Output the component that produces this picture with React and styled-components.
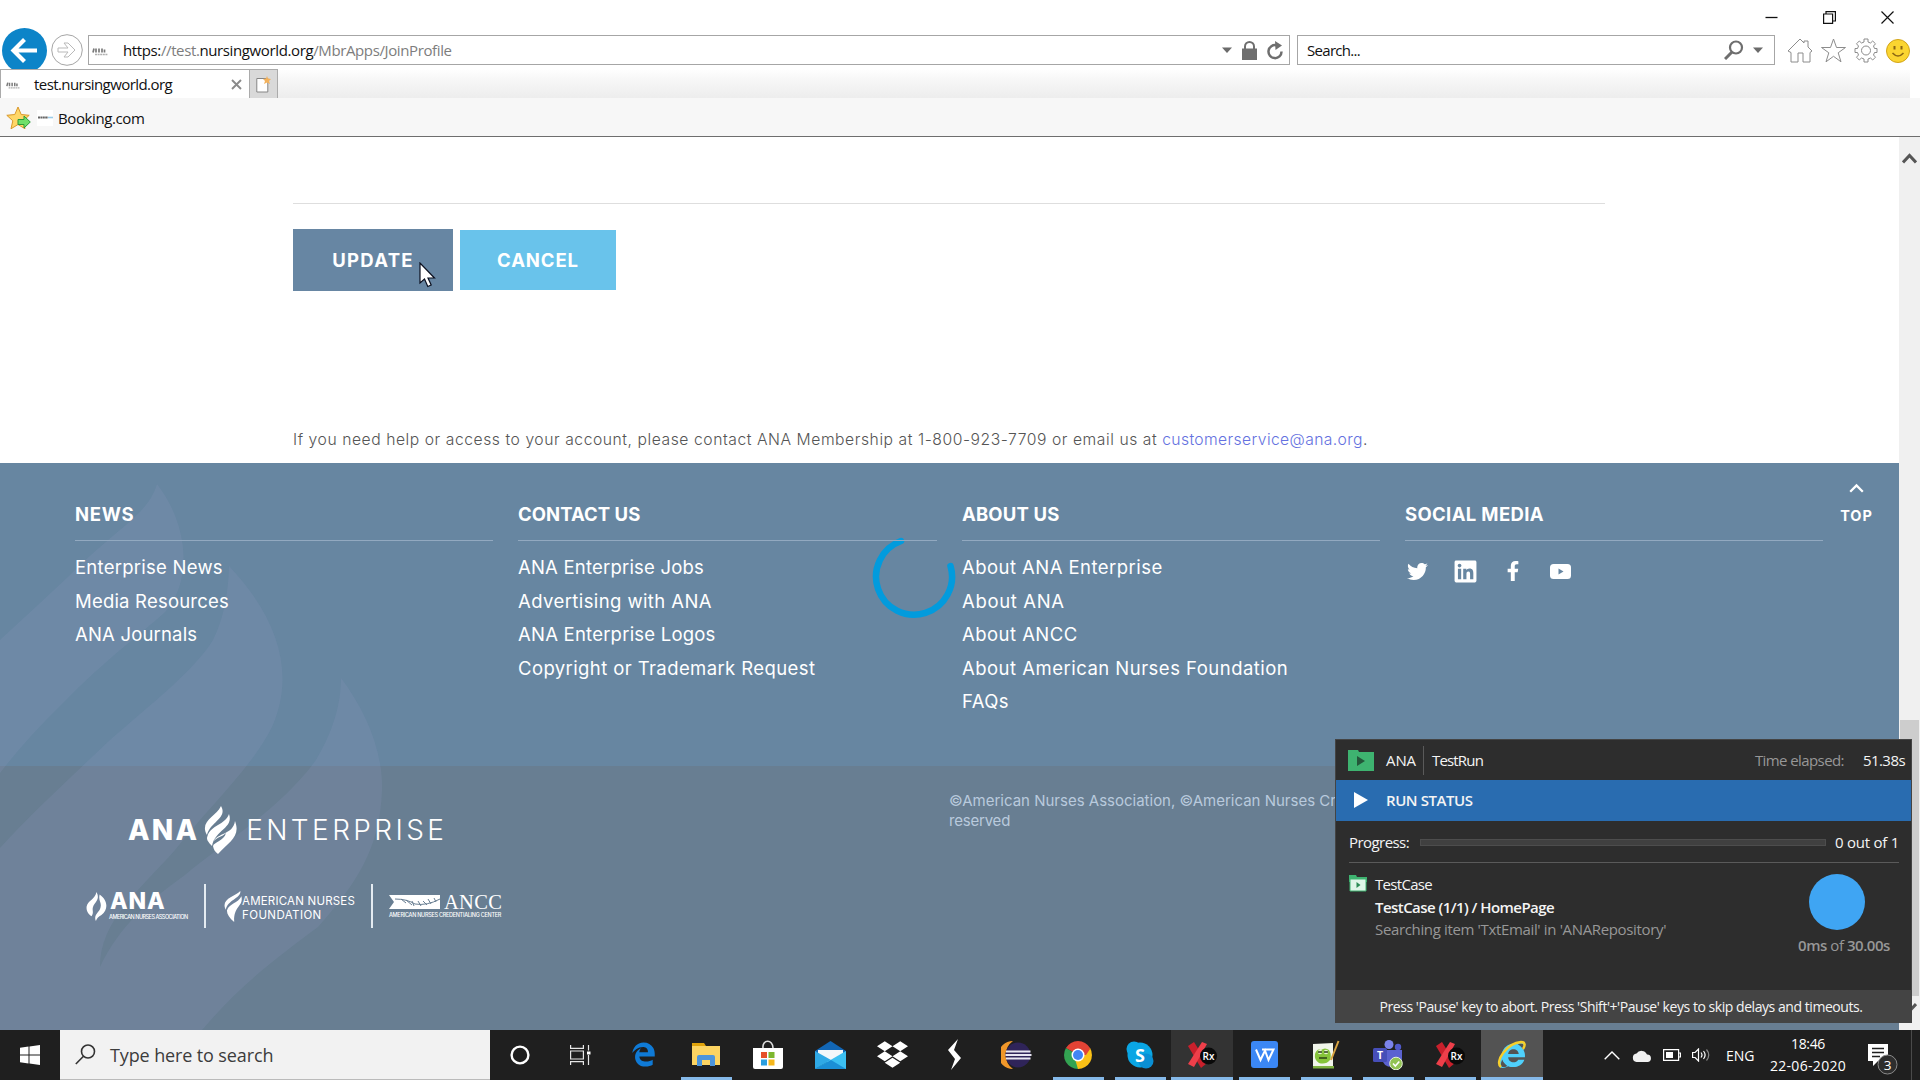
import React from 'react';
import styled, { createGlobalStyle } from 'styled-components';
import { FaTwitter, FaLinkedin, FaFacebookF, FaDropbox, FaEdgeLegacy, FaInternetExplorer } from 'react-icons/fa';

const Global = createGlobalStyle`
  * { box-sizing: border-box; }
  html, body { margin: 0; padding: 0; overflow: hidden; }
  body { background: #fff; }
  svg { display: block; flex: none; }
`;

const SYSTEM = '"Open Sans", "Noto Sans", sans-serif';
const BRAND = 'Inter, "Open Sans", sans-serif';

const Desktop = styled.div`
  position: relative;
  display: flex;
  flex-direction: column;
  width: 1920px;
  height: 1080px;
  overflow: hidden;
  background: #fff;
  font-family: ${SYSTEM};
`;

const Label = styled.span`
  white-space: nowrap;
  letter-spacing: ${p => (p.$ls === undefined ? 'inherit' : `${p.$ls}px`)};
  color: ${p => p.$color || 'inherit'};
  font-weight: ${p => p.$weight || 'inherit'};
`;

/* ---------- browser chrome ---------- */
const TitleBar = styled.div`
  display: flex;
  justify-content: flex-end;
  align-items: flex-end;
  height: 28px;
  padding: 0 26px 4px 0;
  gap: 45px;
`;
const NavRow = styled.div`
  display: flex;
  height: 41px;
  padding-left: 2px;
  overflow: hidden;
`;
const ForwardWrap = styled.div`
  margin: 6px 5px 0 4px;
`;
const Field = styled.div`
  display: flex;
  align-items: center;
  width: ${p => p.$w}px;
  height: 30px;
  margin: 7px ${p => p.$mr}px 0 0;
  padding: 0 ${p => p.$pr}px 0 ${p => p.$pl}px;
  border: 1px solid #a6a6a6;
  font-size: 15px;
  color: #111;
`;
const Spring = styled.div`
  flex: 1;
`;
const FieldIcons = styled.div`
  display: flex;
  align-items: center;
  gap: ${p => p.$gap}px;
`;
const ToolIcons = styled.div`
  display: flex;
  align-items: center;
  gap: 8px;
  padding-top: 4px;
`;
const TabRow = styled.div`
  display: flex;
  height: 29px;
  margin-right: 10px;
  background: linear-gradient(#ffffff 0%, #f7f7f7 35%, #ededed 100%);
`;
const Tab = styled.div`
  display: flex;
  align-items: center;
  width: 250px;
  padding: 0 7px 0 5px;
  border: 1px solid #ababab;
  border-bottom: 0;
  background: #fff;
  font-size: 15px;
  color: #111;
`;
const NewTab = styled.div`
  display: flex;
  align-items: center;
  justify-content: center;
  width: 28px;
  border: 1px solid #ababab;
  border-left: 0;
  border-bottom: 0;
  background: #d9d9d9;
`;
const Favourites = styled.div`
  display: flex;
  align-items: center;
  height: 39px;
  padding: 2px 0 0 6px;
  border-bottom: 1px solid #6e6e6e;
  background: #f7f7f7;
  font-size: 15px;
  color: #111;
`;
const SiteMark = styled.div`
  width: ${p => p.$w}px;
  margin-right: ${p => p.$mr}px;
`;

/* ---------- page ---------- */
const Viewport = styled.div`
  display: flex;
  height: 893px;
`;
const Page = styled.div`
  position: relative;
  display: flex;
  flex-direction: column;
  width: 1899px;
  font-family: ${BRAND};
`;
const Scrollbar = styled.div`
  display: flex;
  flex-direction: column;
  align-items: center;
  width: 21px;
  background: #f0f0f0;
`;
const ScrollCap = styled.div`
  display: flex;
  align-items: center;
  justify-content: center;
  height: 43px;
`;
const ScrollThumb = styled.div`
  width: 19px;
  height: 276px;
  margin-top: 540px;
  background: #cdcdcd;
`;
const Form = styled.main`
  display: flex;
  flex-direction: column;
  height: 326px;
  padding: 66px 294px 0 293px;
`;
const Rule = styled.div`
  height: 1px;
  background: ${p => p.$color};
`;
const Buttons = styled.div`
  display: flex;
  align-items: center;
  gap: 7px;
  margin-top: 25px;
`;
const Button = styled.div`
  display: flex;
  align-items: center;
  justify-content: center;
  width: ${p => p.$w}px;
  height: ${p => p.$h}px;
  background: ${p => p.$bg};
  font-size: 18.5px;
  font-weight: 700;
  color: #fff;
`;
const Help = styled.p`
  margin: 138px 0 0;
  font-size: 15.7px;
  font-weight: 300;
  line-height: 22px;
  color: #555;
  white-space: nowrap;
`;

const Footer = styled.footer`
  position: relative;
  display: flex;
  flex-direction: column;
  height: 567px;
  color: #fff;
`;
const FooterTop = styled.section`
  display: grid;
  grid-template-columns: 418px 419px 418px 418px auto;
  column-gap: 25px;
  height: 303px;
  padding-left: 75px;
  background: #6786a1;
`;
const FooterBottom = styled.section`
  display: flex;
  height: 264px;
  background: #687e92;
`;
const Flames = styled.svg`
  position: absolute;
  left: 0;
  top: 0;
`;
const Column = styled.div`
  position: relative;
  z-index: 1;
  padding-top: 38px;
`;
const Heading = styled.h3`
  margin: 0 0 12px;
  height: 27px;
  line-height: 27px;
  font-size: 18.5px;
  font-weight: 700;
`;
const Links = styled.div`
  display: flex;
  flex-direction: column;
  margin-top: 10px;
  font-size: 18.5px;
  line-height: 33.6px;
`;
const Social = styled.div`
  display: flex;
  align-items: center;
  margin-top: 18px;
  height: 24px;
  padding-left: 2px;
`;
const SocialSlot = styled.div`
  display: flex;
  width: ${p => p.$w}px;
`;
const ToTop = styled.div`
  display: flex;
  flex-direction: column;
  align-items: center;
  width: 33px;
  margin-left: -8px;
  padding-top: 20px;
  font-size: 14.5px;
  font-weight: 700;
  line-height: 20px;
  gap: 13px;
`;
const Brands = styled.div`
  position: relative;
  z-index: 1;
  width: 949px;
  padding: 39px 0 0 86px;
`;
const MainLogo = styled.div`
  display: flex;
  align-items: center;
  height: 50px;
  margin-left: 42px;
  font-size: 28px;
`;
const SubLogos = styled.div`
  display: flex;
  align-items: center;
  height: 44px;
  margin-top: 29px;
`;
const Divider = styled.div`
  width: ${p => (p.$w === undefined ? 2 : p.$w)}px;
  height: ${p => p.$h}px;
  background: ${p => p.$color || 'transparent'};
  margin: 0 ${p => p.$mr || 0}px 0 ${p => p.$ml || 0}px;
`;
const Stack = styled.div`
  display: flex;
  flex-direction: column;
  width: ${p => p.$w}px;
  margin-left: ${p => p.$ml || 0}px;
  padding-top: ${p => p.$pt || 0}px;
  font-size: ${p => p.$size}px;
  line-height: ${p => p.$lh}px;
  font-weight: ${p => p.$weight || 400};
`;
const Tiny = styled.div`
  font-size: 5.5px;
  font-weight: ${p => p.$weight || 500};
  line-height: 7px;
  letter-spacing: ${p => p.$ls}px;
  margin-left: ${p => p.$ml || 0}px;
  margin-top: ${p => p.$mt || 0}px;
  white-space: nowrap;
`;
const AnccRow = styled.div`
  display: flex;
  align-items: center;
  height: 18px;
  gap: 4px;
  font: 400 20.5px/18px "Liberation Serif", serif;
`;
const Copyright = styled.div`
  padding-top: 25px;
  font-size: 15px;
  line-height: 20px;
  color: #b9cadd;
  white-space: nowrap;
`;
const Spinner = styled.svg`
  position: absolute;
  left: 870px;
  top: 533px;
`;
const Cursor = styled.svg`
  position: absolute;
  left: 419px;
  top: 262px;
`;

/* ---------- run status window ---------- */
const Run = styled.div`
  position: absolute;
  left: 1335px;
  top: 739px;
  display: flex;
  flex-direction: column;
  width: 577px;
  height: 284px;
  border: 1px solid #444;
  background: #2d2d2d;
  font-size: 15px;
  color: #f4f4f4;
`;
const RunHead = styled.div`
  display: flex;
  align-items: center;
  height: 40px;
  padding: 0 6px 0 12px;
`;
const RunStatus = styled.div`
  display: flex;
  align-items: center;
  height: 41px;
  padding: 0 0 1px 18px;
  gap: 18px;
  background: #296cb0;
`;
const RunBody = styled.div`
  flex: 1;
  padding: 8px 12px 0 13px;
`;
const Progress = styled.div`
  display: flex;
  align-items: center;
  height: 26px;
  margin-bottom: 7px;
`;
const Track = styled.div`
  flex: 1;
  height: 7px;
  margin: 0 9px 0 11px;
  border: 1px solid #4d4d4d;
  background: #404040;
`;
const Case = styled.div`
  display: flex;
  margin-top: 10px;
`;
const CaseText = styled.div`
  display: flex;
  flex-direction: column;
  flex: 1;
  margin-left: 8px;
  line-height: 22.5px;
`;
const Timer = styled.div`
  display: flex;
  flex-direction: column;
  align-items: center;
  width: 94px;
  margin-right: 8px;
`;
const Dot = styled.div`
  width: 56px;
  height: 56px;
  margin: 1px 14px 5px 0;
  border-radius: 50%;
  background: #3fa5f3;
`;
const RunFoot = styled.div`
  display: flex;
  align-items: center;
  justify-content: center;
  height: 32px;
  padding-right: 5px;
  background: #444;
  font-size: 14px;
`;

/* ---------- taskbar ---------- */
const Taskbar = styled.div`
  display: flex;
  height: 50px;
  background: #1f1f1f;
  color: #fff;
`;
const Start = styled.div`
  display: flex;
  align-items: center;
  width: 60px;
  padding-left: 20px;
`;
const SearchBox = styled.div`
  display: flex;
  align-items: center;
  gap: 14px;
  width: 430px;
  padding-left: 15px;
  background: #f2f2f2;
  border-bottom: 1px solid #bbb;
  font-size: 18px;
  color: #3c3c3c;
`;
const TaskButton = styled.div`
  display: flex;
  flex-direction: column;
  align-items: center;
  width: ${p => p.$w || 62}px;
  background: ${p => p.$bg || 'transparent'};
`;
const TaskIcon = styled.div`
  display: flex;
  align-items: center;
  justify-content: center;
  height: 47px;
  padding-top: 2px;
`;
const Running = styled.div`
  width: ${p => (p.$full ? '100%' : '51px')};
  height: 3px;
  background: #85b9e9;
`;
const Tray = styled.div`
  display: flex;
  align-items: center;
  flex: 1;
  padding: 0 5px 0 61px;
  font-size: 14px;
`;
const TrayItem = styled.div`
  width: ${p => p.$w}px;
  margin-right: ${p => p.$mr}px;
  padding-top: ${p => p.$pt || 0}px;
`;
const Clock = styled.div`
  display: flex;
  flex-direction: column;
  align-items: center;
  width: 78px;
  margin-right: 21px;
  line-height: 22.5px;
`;

const SmallMark = ({ w = 16 }) => (
  <svg width={w} height="14" viewBox="0 0 16 14">
    <path d="M1 9.500l1-4M4 9.500v-4M7 9.500v-4M10 9.500v-4M12.500 9.500v-3" stroke="#7a7a7a" strokeWidth="1.700" />
    <path d="M3 11.500h13" stroke="#b0b0b0" strokeWidth="1.400" strokeDasharray="2 .6" />
  </svg>
);

const Flame = ({ w, h, kind }) => (
  <svg width={w} height={h} viewBox="0 0 34 48" preserveAspectRatio="none" fill="#fff">
    {kind === 'full' && (
      <>
        <path d="M18 0C25 12 7 16 4 29C-4 15 13 11 18 0Z" />
        <path d="M26 8C31 22 12 24 9 40C5 36 3 33 4.500 30C8 19 22 19 26 8Z" />
        <path d="M32 15C38 31 26 36 15 48C12 46 10.500 43 10 40C11 36 21 35 23 27C19 31 14 31 11 35C14 27 30 29 32 15Z" />
      </>
    )}
    {kind === 'duo' && (
      <>
        <path d="M17 0C24 13 13 17 11 26C10 31 13 34 9 40C4 37 0 31 1 24C3 14 14 13 17 0Z" />
        <path d="M22 4C35 13 37 29 25 38C20 41 18 43 16 48C11 36 24 34 24 22C24 16 20 14 22 4Z" />
      </>
    )}
    {kind === 'single' && (
      <>
        <path d="M31 0C33 11 8 14 5 29C-5 12 21 9 31 0Z" />
        <path d="M33 8C37 25 19 22 20 48C12 42 7 36 7 30C11 19 27 19 33 8Z" />
      </>
    )}
  </svg>
);

const Rx = () => (
  <svg width="30" height="29" viewBox="0 0 30 29">
    <path d="M1 6L7 2L20 23L14 28Z" fill="#c9202c" />
    <path d="M15 2L20 4L7 27L1 24Z" fill="#ee3f4a" />
    <circle cx="21.5" cy="16" r="8.5" fill="#0a0a0a" />
    <text x="15.5" y="20" fontFamily="Open Sans" fontWeight="600" fontSize="10" fill="#fff">Rx</text>
  </svg>
);

const PINS = [
  { id: 'edge', w: 64, icon: <FaEdgeLegacy size={25} color="#0f7ad6" /> },
  {
    id: 'files', run: true,
    icon: (
      <svg width="28" height="25" viewBox="0 0 28 25">
        <path d="M0 1h12l2 3h-14z" fill="#e0a30b" />
        <path d="M0 4h28v19H0z" fill="#fcd462" />
        <path d="M5 24v-9q0-2 2-2h14q2 0 2 2v9h-5v-6h-8v6z" fill="#4c95dc" />
      </svg>
    ),
  },
  {
    id: 'store',
    icon: (
      <svg width="30" height="30" viewBox="0 0 30 30">
        <path d="M10 8C9 -1 20 -1 20 8" fill="none" stroke="#ddd" strokeWidth="1.6" />
        <path d="M0 8h30v19q0 2-2 2H2q-2 0-2-2z" fill="#fff" />
        <path d="M8 12h6v6H8z" fill="#e5502a" /><path d="M15.500 12h6v6h-6z" fill="#7db72f" />
        <path d="M8 19.500h6v6H8z" fill="#2a9fe0" /><path d="M15.500 19.500h6v6h-6z" fill="#f6b71b" />
      </svg>
    ),
  },
  {
    id: 'mail',
    icon: (
      <svg width="31" height="28" viewBox="0 0 31 28">
        <path d="M0 10L15.500 0L31 10v4H0z" fill="#1266b5" />
        <path d="M3 9h25v12H3z" fill="#f3f7fa" />
        <path d="M0 10l16 9l-16 9z" fill="#2fa9e6" />
        <path d="M31 10L0 28h31z" fill="#3cc0f2" />
        <path d="M16 19l15 9H0z" fill="#1b8fd6" />
      </svg>
    ),
  },
  { id: 'dropbox', icon: <FaDropbox size={31} color="#fff" /> },
  {
    id: 'bolt',
    icon: (
      <svg width="14" height="31" viewBox="0 0 14 31">
        <path d="M11 0L1 11L8 20L4 31L14 19L7 11Z" fill="#fff" />
      </svg>
    ),
  },
  {
    id: 'eclipse',
    icon: (
      <svg width="31" height="28" viewBox="0 0 31 28">
        <path d="M12 0A14.500 14 0 0 0 12 28A17 17 0 0 1 12 0Z" fill="#f0972a" />
        <circle cx="17" cy="14" r="12.500" fill="#2f2459" />
        <path d="M5 10.500h24.500M4.500 14h26M5 17.500h24.500" stroke="#e9e7f3" strokeWidth="2" />
      </svg>
    ),
  },
  {
    id: 'chrome', run: true,
    icon: (
      <svg width="28" height="28" viewBox="0 0 28 28">
        <path d="M14 14L1.900 7A14 14 0 0 1 26.100 7Z" fill="#e24335" />
        <path d="M14 14L26.100 7A14 14 0 0 1 14 28Z" fill="#fbc116" />
        <path d="M14 14V28A14 14 0 0 1 1.900 7Z" fill="#33a352" />
        <path d="M14 7.500H26.400L22 14H14Z" fill="#e24335" />
        <path d="M19.600 17.200L14 28L11 18Z" fill="#fbc116" />
        <circle cx="14" cy="14" r="6.500" fill="#fff" />
        <circle cx="14" cy="14" r="5" fill="#4285f4" />
      </svg>
    ),
  },
  {
    id: 'skype', run: true,
    icon: (
      <svg width="28" height="28" viewBox="0 0 28 28">
        <circle cx="14" cy="14" r="12.500" fill="#0aa6e4" />
        <circle cx="8" cy="8" r="7.500" fill="#0aa6e4" /><circle cx="20" cy="20" r="7.500" fill="#0a8fd4" />
        <text x="14" y="20.500" textAnchor="middle" fontFamily="Open Sans" fontWeight="700" fontSize="18" fill="#fff">S</text>
      </svg>
    ),
  },
  { id: 'ranorex', run: true, full: true, bg: '#333', icon: <Rx /> },
  {
    id: 'wps', run: true,
    icon: (
      <svg width="27" height="27" viewBox="0 0 27 27">
        <rect width="27" height="27" rx="3" fill="#3b87f5" />
        <path d="M5 8.500L9.500 19L14 9.500L17.500 19L22.500 8.500H11" fill="none" stroke="#fff" strokeWidth="2" />
      </svg>
    ),
  },
  {
    id: 'notepad', run: true,
    icon: (
      <svg width="28" height="29" viewBox="0 0 28 29">
        <path d="M1 4l20-1v25H1z" fill="#f1f5ea" />
        <path d="M1 26h21v2.500H1z" fill="#7fb241" />
        <path d="M3 14q2-6 6-4q4-3 8 0q3 5 1 10q-4 5-11 3q-5-3-4-9z" fill="#86c43a" />
        <circle cx="8" cy="12" r="2.200" fill="#e9f5d5" /><circle cx="14" cy="12" r="2.200" fill="#e9f5d5" />
        <path d="M6 12h4M12 12h4M7 18h8" stroke="#2d4315" strokeWidth="1.500" />
        <path d="M26.500 1L19 20" stroke="#d9a441" strokeWidth="2" />
      </svg>
    ),
  },
  {
    id: 'teams', run: true,
    icon: (
      <svg width="30" height="30" viewBox="0 0 30 30">
        <circle cx="16" cy="4.500" r="4.500" fill="#7b83eb" /><circle cx="25" cy="7" r="3.200" fill="#5059c9" />
        <path d="M9 10h20v9q-2 8-10 8q-9 0-10-9z" fill="#5b62d0" />
        <rect y="8" width="14" height="14" rx="1.500" fill="#464eb8" />
        <text x="7" y="18.800" textAnchor="middle" fontFamily="Open Sans" fontWeight="700" fontSize="10.500" fill="#fff">T</text>
        <circle cx="23" cy="23.500" r="6.300" fill="#92c353" stroke="#e8f2da" />
        <path d="M20 23.500l2.300 2.500l4-4.500" fill="none" stroke="#fff" strokeWidth="1.600" />
      </svg>
    ),
  },
  { id: 'ranorex-2', run: true, icon: <Rx /> },
  {
    id: 'ie', run: true, full: true, bg: '#535353',
    icon: (
      <svg width="30" height="30" viewBox="0 0 30 30">
        <FaInternetExplorer size={26} x="2" y="2" color="#4fd0fb" />
        <path d="M4 27C-3 22 10 3 24 2C29 2 28 6 26 9" fill="none" stroke="#f7cf2b" strokeWidth="2.400" />
      </svg>
    ),
  },
];

const COLUMNS = [
  { title: ['NEWS', 0.7], links: [['Enterprise News', 0.25], ['Media Resources', 0.2], ['ANA Journals', 0.18]] },
  {
    title: ['CONTACT US', 0.05],
    links: [['ANA Enterprise Jobs', 0.2], ['Advertising with ANA', 0.41], ['ANA Enterprise Logos', 0.22], ['Copyright or Trademark Request', 0.4]],
  },
  {
    title: ['ABOUT US', 0.15],
    links: [['About ANA Enterprise', 0.45], ['About ANA', 0.65], ['About ANCC', 0.46], ['About American Nurses Foundation', 0.48], ['FAQs', 0.4]],
  },
];

function BrowserChrome() {
  return (
    <>
      <TitleBar>
        <svg width="13" height="13" viewBox="0 0 13 13"><path d="M.5 6.500h12" stroke="#111" strokeWidth="1.300" /></svg>
        <svg width="13" height="13" viewBox="0 0 13 13" fill="none" stroke="#111" strokeWidth="1.200"><path d="M.6 3h9v9.400h-9zM3 3V.6h9.400V10H9.600" /></svg>
        <svg width="13" height="13" viewBox="0 0 13 13"><path d="M.5.5l12 12M12.500.5l-12 12" stroke="#111" strokeWidth="1.200" /></svg>
      </TitleBar>
      <NavRow>
        <svg width="45" height="45" viewBox="0 0 45 45">
          <circle cx="22.500" cy="22.500" r="22.500" fill="#0c84c8" />
          <path d="M35 22.500H13M22.500 11.500L11.500 22.500L22.500 33.500" fill="none" stroke="#fff" strokeWidth="4.200" />
        </svg>
        <ForwardWrap>
          <svg width="32" height="32" viewBox="0 0 32 32" fill="none" stroke="#a5a5a5">
            <circle cx="16" cy="16" r="15.300" />
            <path d="M7 14h10l-4-5h4l7 7l-7 7h-4l4-5H7z" stroke="#b9b9b9" />
          </svg>
        </ForwardWrap>
        <Field $w={1202} $mr={7} $pl={3} $pr={5}>
          <SiteMark $w={16} $mr={15}><SmallMark /></SiteMark>
          <Label $ls={-0.38}>
            https:<Label $color="#7d7d7d">//test.</Label>nursingworld.org<Label $color="#7d7d7d">/MbrApps/JoinProfile</Label>
          </Label>
          <Spring />
          <FieldIcons $gap={10}>
            <svg width="10" height="6" viewBox="0 0 10 6"><path d="M0 .5h10L5 6z" fill="#6b6b6b" /></svg>
            <svg width="15" height="19" viewBox="0 0 15 19">
              <path d="M0 7.500h15V19H0z" fill="#6e6e6e" />
              <path d="M3 8V5.500a4.500 4.500 0 0 1 9 0V8" fill="none" stroke="#6e6e6e" strokeWidth="2" />
            </svg>
            <svg width="17" height="19" viewBox="0 0 17 19">
              <path d="M14.500 10.500A6.500 6.500 0 1 1 9.500 4.300" fill="none" stroke="#6e6e6e" strokeWidth="2.500" />
              <path d="M8 0l7 4.500l-6.500 4.500z" fill="#6e6e6e" />
            </svg>
          </FieldIcons>
        </Field>
        <Field $w={478} $mr={12} $pl={9} $pr={11}>
          <Label $ls={-0.7}>Search...</Label>
          <Spring />
          <FieldIcons $gap={9}>
            <svg width="20" height="20" viewBox="0 0 20 20" fill="none" stroke="#6e6e6e">
              <circle cx="12" cy="7.500" r="6" strokeWidth="2.200" /><path d="M8 12L1 19" strokeWidth="3" />
            </svg>
            <svg width="10" height="6" viewBox="0 0 10 6"><path d="M0 .5h10L5 6z" fill="#6b6b6b" /></svg>
          </FieldIcons>
        </Field>
        <ToolIcons>
          <svg width="26" height="25" viewBox="0 0 26 25" fill="none" stroke="#8c8c8c">
            <path d="M1 13L13 1l4 4V3h4v6l4 4l-2 1.500V24h-7v-9h-5v9H4V14.500z" />
          </svg>
          <svg width="25" height="25" viewBox="0 0 25 25" fill="none" stroke="#8c8c8c">
            <path d="M12.500 1l3 8.500h9l-7.300 5.300l2.800 9l-7.500-5.500l-7.500 5.500l2.800-9L.5 9.500h9z" />
          </svg>
          <svg width="24" height="25" viewBox="0 0 24 25" fill="none" stroke="#8c8c8c">
            <path d="M10 1h4v3l2.500 1l2.200-2l2.800 2.800l-2 2.200l1 2.500H23v4h-2.500l-1 2.500l2 2.200l-2.800 2.800l-2.200-2L14 21v3h-4v-3l-2.500-1l-2.200 2l-2.800-2.800l2-2.200l-1-2.500H1v-4h2.500l1-2.500l-2-2.200L5.300 3l2.200 2L10 4z" />
            <circle cx="12" cy="12.500" r="4.500" />
          </svg>
          <svg width="24" height="24" viewBox="0 0 24 24">
            <circle cx="12" cy="12" r="11.500" fill="#fbd531" stroke="#d2a419" />
            <path d="M8.500 7v3.500M15.500 7v3.500" stroke="#8b6714" strokeWidth="2" />
            <path d="M6.500 14q5.500 6 11 0" fill="none" stroke="#8b6714" strokeWidth="1.500" />
          </svg>
        </ToolIcons>
      </NavRow>
      <TabRow>
        <Tab>
          <SiteMark $w={14} $mr={14}><SmallMark w={14} /></SiteMark>
          <Label $ls={-0.57}>test.nursingworld.org</Label>
          <Spring />
          <svg width="11" height="11" viewBox="0 0 11 11"><path d="M1 1l9 9M10 1l-9 9" stroke="#8a8a8a" strokeWidth="1.900" /></svg>
        </Tab>
        <NewTab>
          <svg width="15" height="17" viewBox="0 0 15 17">
            <path d="M.8 2.500h11v13.500H.8z" fill="#fff" stroke="#858585" />
            <path d="M11 0l1 2.500L15 3l-2 2l1 3l-3-1.500L8 8l1-3l-2-2l3-.5z" fill="#f4b25c" />
          </svg>
        </NewTab>
      </TabRow>
      <Favourites>
        <svg width="25" height="24" viewBox="0 0 25 24">
          <path d="M12 1l3.200 7.500l8 .8l-6 5.500l1.800 8L12 18.500L5 22.800l1.800-8l-6-5.500l8-.8z" fill="#ffd767" stroke="#d9982c" />
          <path d="M12 13.500h6V10l6.300 6l-6.300 6v-3.500h-6z" fill="#6fe06a" stroke="#2c9a3a" />
        </svg>
        <SiteMark $w={22} $mr={5}>
          <svg width="22" height="16" viewBox="0 0 22 16"><path d="M6 0h16v16H6z" fill="#fff" /><path d="M7 7.500h10" stroke="#666" strokeWidth="2" strokeDasharray="2 .4" /><path d="M17 7.500h5" stroke="#9bcbe8" strokeWidth="1.600" /></svg>
        </SiteMark>
        <Label $ls={-0.4}>Booking.com</Label>
      </Favourites>
    </>
  );
}

function SiteFooter() {
  return (
    <Footer>
      <FooterTop>
        {COLUMNS.map(c => (
          <Column key={c.title[0]}>
            <Heading><Label $ls={c.title[1]}>{c.title[0]}</Label></Heading>
            <Rule $color="#92a9c0" />
            <Links>{c.links.map(([t, ls]) => <Label key={t} $ls={ls}>{t}</Label>)}</Links>
          </Column>
        ))}
        <Column>
          <Heading><Label $ls={0.35}>SOCIAL MEDIA</Label></Heading>
          <Rule $color="#92a9c0" />
          <Social>
            <SocialSlot $w={46}><FaTwitter size={21} /></SocialSlot>
            <SocialSlot $w={50}><FaLinkedin size={25} /></SocialSlot>
            <SocialSlot $w={47}><FaFacebookF size={20} /></SocialSlot>
            <svg width="21" height="15" viewBox="0 0 21 15">
              <rect width="21" height="15" rx="3.500" fill="#fff" /><path d="M8.500 4.500l5 3l-5 3z" fill="#6786a1" />
            </svg>
          </Social>
        </Column>
        <ToTop>
          <svg width="15" height="10" viewBox="0 0 15 10"><path d="M1.200 8.800l6.300-6.300l6.300 6.300" fill="none" stroke="#fff" strokeWidth="2.300" /></svg>
          <Label $ls={0.9}>TOP</Label>
        </ToTop>
      </FooterTop>
      <FooterBottom>
        <Brands>
          <MainLogo>
            <Label $ls={2.2} $weight={800}>ANA</Label>
            <Divider $w={4} $h={1} />
            <Flame w={34} h={48} kind="full" />
            <Divider $w={9} $h={1} />
            <Label $ls={3.4} $weight={300}>ENTERPRISE</Label>
          </MainLogo>
          <SubLogos>
            <Flame w={21} h={29} kind="duo" />
            <Stack $w={80} $ml={3} $size={23} $lh={20} $weight={800}>
              <Label $ls={0.9}>ANA</Label>
              <Tiny $ls={-0.5} $ml={-1} $mt={3}>AMERICAN NURSES ASSOCIATION</Tiny>
            </Stack>
            <Divider $h={44} $color="#e4ebf1" $ml={14} $mr={17} />
            <Flame w={19} h={31} kind="single" />
            <Stack $w={113} $size={11.5} $lh={13.3} $pt={5}>
              <Label $ls={0.2}>AMERICAN NURSES</Label>
              <Label $ls={0.4}>FOUNDATION</Label>
            </Stack>
            <Divider $h={44} $color="#e4ebf1" $ml={16} $mr={16} />
            <Stack $w={114} $size={20} $lh={20}>
              <AnccRow>
                <svg width="51" height="14" viewBox="0 0 51 14">
                  <path d="M0 0h51v14H0l5-7z" fill="#fff" />
                  <path d="M6 4q12 0 20 5q12 2 25-5M12 4l5 4M17 5l6 5M23 6l2 5M29 6l3 5M34 6l4 4M39 4l3 5M45 3l2 4" fill="none" stroke="#687e92" strokeWidth="1" />
                </svg>
                <Label $ls={0.3}>ANCC</Label>
              </AnccRow>
              <Tiny $ls={-0.28} $weight={500} $mt={1}>AMERICAN NURSES CREDENTIALING CENTER</Tiny>
            </Stack>
          </SubLogos>
        </Brands>
        <Copyright>
          ©American Nurses Association, ©American Nurses Cr<br />
          <Label $ls={-0.2}>reserved</Label>
        </Copyright>
      </FooterBottom>
      <Flames width="400" height="567" viewBox="0 463 400 567">
        <g fill="#8c96bd" fillOpacity=".2">
          <path d="M157 484C148 515 120 525 68 577Q35 608 0 640V773Q25 740 61 705C110 655 140 635 165 612C190 585 192 530 157 484Z" />
          <path d="M229 566Q228 610 213 640C195 670 150 705 110 740C70 778 30 815 0 848V1030H202C240 985 280 955 318 927C355 885 380 850 382 790C383 750 365 710 341 678C341 715 325 745 316 760C280 810 220 845 185 875C150 900 120 925 100 967C100 920 140 890 175 850C210 805 250 770 272 727C295 675 280 620 229 566Z" />
        </g>
      </Flames>
    </Footer>
  );
}

function RunWindow() {
  return (
    <Run>
      <RunHead>
        <svg width="26" height="22" viewBox="0 0 26 22"><path d="M0 1h10l1 2h15v19H0z" fill="#3eb370" /><path d="M9 7l8 5l-8 5z" fill="#24563a" /></svg>
        <Divider $w={12} $h={1} />
        <Label $ls={-0.1}>ANA</Label>
        <Divider $w={1} $h={29} $color="#5a5a5a" $ml={7} $mr={8} />
        <Label $ls={-0.83}>TestRun</Label>
        <Spring />
        <Label $ls={-0.59} $color="#979797">Time elapsed:</Label>
        <Divider $w={19} $h={1} />
        <Label $ls={-0.56}>51.38s</Label>
      </RunHead>
      <RunStatus>
        <svg width="14" height="16" viewBox="0 0 14 16"><path d="M0 0l14 8l-14 8z" fill="#fff" /></svg>
        <Label $ls={-0.43} $weight={600}>RUN STATUS</Label>
      </RunStatus>
      <RunBody>
        <Progress>
          <Label $ls={-0.56}>Progress:</Label>
          <Track />
          <Label $ls={-0.24}>0 out of 1</Label>
        </Progress>
        <Rule $color="#5a5a5a" />
        <Case>
          <svg width="18" height="19" viewBox="0 0 18 19"><path d="M0 2h7l1 2h10v5H0z" fill="#3eb370" /><path d="M1 6h16v12H1z" fill="#dff5e8" stroke="#3eb370" /><path d="M7.500 9l4 3l-4 3z" fill="#2b8a54" /></svg>
          <CaseText>
            <Label $ls={-0.69}>TestCase</Label>
            <Label $ls={-0.55} $weight={600}>TestCase (1/1) / HomePage</Label>
            <Label $ls={-0.35} $color="#979797">Searching item 'TxtEmail' in 'ANARepository'</Label>
          </CaseText>
          <Timer>
            <Dot />
            <Label $ls={-0.45} $color="#979797"><Label $weight={600}>0ms</Label> of <Label $weight={600}>30.00s</Label></Label>
          </Timer>
        </Case>
      </RunBody>
      <RunFoot><Label $ls={-0.45}>Press 'Pause' key to abort. Press 'Shift'+'Pause' keys to skip delays and timeouts.</Label></RunFoot>
    </Run>
  );
}

function WindowsTaskbar() {
  return (
    <Taskbar>
      <Start>
        <svg width="20" height="20" viewBox="0 0 20 20" fill="#fff"><path d="M0 2.800l8.500-1.200v8H0zM9.500 1.400L20 0v9.600H9.500zM0 10.500h8.500v8L0 17.300zM9.500 10.500H20V20L9.500 18.600z" /></svg>
      </Start>
      <SearchBox>
        <svg width="21" height="21" viewBox="0 0 21 21" fill="none" stroke="#333" strokeWidth="1.600"><circle cx="13" cy="7.500" r="6.500" /><path d="M8.500 12.300L.8 20" /></svg>
        <Label $ls={-0.12}>Type here to search</Label>
      </SearchBox>
      <TaskButton $w={59}>
        <TaskIcon>
          <svg width="20" height="20" viewBox="0 0 20 20"><circle cx="10" cy="10" r="8.400" fill="none" stroke="#fff" strokeWidth="2.400" /></svg>
        </TaskIcon>
      </TaskButton>
      <TaskButton>
        <TaskIcon>
          <svg width="21" height="20" viewBox="0 0 21 20" fill="none" stroke="#e6e6e6" strokeWidth="1.200">
            <path d="M.6 0v3.400h12.800V0M.6 6h12.800v8H.6zM.6 20v-3.400h12.800V20M18.500 0v5.500M18.500 10v10" /><path d="M17 6.500h3.500v3H17z" fill="#fff" stroke="none" />
          </svg>
        </TaskIcon>
      </TaskButton>
      {PINS.map(p => (
        <TaskButton key={p.id} $bg={p.bg} $w={p.w}>
          <TaskIcon>{p.icon}</TaskIcon>
          {p.run && <Running $full={p.full} />}
        </TaskButton>
      ))}
      <Tray>
        <TrayItem $w={16} $mr={12}><svg width="16" height="9" viewBox="0 0 16 9"><path d="M.7 8.300L8 1l7.300 7.300" fill="none" stroke="#fff" strokeWidth="1.400" /></svg></TrayItem>
        <TrayItem $w={20} $mr={11}><svg width="20" height="13" viewBox="0 0 20 13"><path d="M4.500 13a4.300 4.300 0 0 1 0-8.500a6 6 0 0 1 10.500 1a3.800 3.800 0 0 1 1 7.500z" fill="#f1f1f1" /></svg></TrayItem>
        <TrayItem $w={18} $mr={11}><svg width="18" height="12" viewBox="0 0 18 12"><path d="M.6.6h15v10.800H.6zM16 4h1.500v4H16" fill="none" stroke="#fff" strokeWidth="1.200" /><path d="M3 3h7v6H3z" fill="#fff" /></svg></TrayItem>
        <TrayItem $w={19} $mr={15}><svg width="19" height="14" viewBox="0 0 19 14" fill="none" stroke="#fff" strokeWidth="1.200"><path d="M.6 4.500h2.500L6.500 1v12L3.100 9.500H.6zM9 4.500q2 2.500 0 5M11.500 3q3.200 4 0 8" /><path d="M14.500 1.500q4.500 5.500 0 11" stroke="#888" /></svg></TrayItem>
        <TrayItem $w={29} $mr={14}><Label $ls={-0.05}>ENG</Label></TrayItem>
        <Clock><Label $ls={-0.34}>18:46</Label><Label $ls={0.32}>22-06-2020</Label></Clock>
        <TrayItem $w={30} $mr={13} $pt={8}>
          <svg width="30" height="31" viewBox="0 0 30 31">
            <path d="M0 0h20v17H10l-5 5v-5H0z" fill="#fff" /><path d="M4 4.500h12M4 8.500h12M4 12.500h8" stroke="#1f1f1f" strokeWidth="1.400" />
            <circle cx="19.500" cy="20.500" r="9.500" fill="#2e2e2e" stroke="#8a8a8a" />
            <text x="19.500" y="25.500" textAnchor="middle" fontFamily="Open Sans" fontSize="13.500" fill="#fff">3</text>
          </svg>
        </TrayItem>
        <Divider $w={1} $h={50} $color="#4a4a4a" />
      </Tray>
    </Taskbar>
  );
}

export default function App() {
  return (
    <Desktop>
      <Global />
      <BrowserChrome />
      <Viewport>
        <Page>
          <Form>
            <Rule $color="#dedede" />
            <Buttons>
              <Button $w={160} $h={62} $bg="#6786a3"><Label $ls={1.3}>UPDATE</Label></Button>
              <Button $w={156} $h={60} $bg="#69c3eb"><Label $ls={0.9}>CANCEL</Label></Button>
            </Buttons>
            <Help>
              <Label $ls={0.55}>If you need help or access to your account, please contact ANA Membership at 1-800-923-7709 or email us at </Label>
              <Label $ls={0.38} $color="#6471e0">customerservice@ana.org</Label>.
            </Help>
          </Form>
          <SiteFooter />
        </Page>
        <Scrollbar>
          <ScrollCap><svg width="15" height="11" viewBox="0 0 15 11"><path d="M1 9.500l6.500-7l6.500 7" fill="none" stroke="#555" strokeWidth="3" /></svg></ScrollCap>
          <ScrollThumb />
          <Spring />
          <svg width="15" height="28" viewBox="0 0 15 28"><path d="M1 2l6.500 7l6.500-7" fill="none" stroke="#555" strokeWidth="3" /></svg>
        </Scrollbar>
      </Viewport>
      <WindowsTaskbar />
      <Spinner width="88" height="88" viewBox="871 533 88 88">
        <path d="M902 541A38 38 0 1 0 951.500 566" fill="none" stroke="#029bdd" strokeWidth="6.500" strokeLinecap="round" />
      </Spinner>
      <Cursor width="17" height="26" viewBox="0 0 17 26">
        <path d="M1 1v20l4.500-4l3.300 7.500l3.400-1.500l-3.200-7H15.500z" fill="#fff" stroke="#0b1020" strokeWidth="1.200" />
      </Cursor>
      <RunWindow />
    </Desktop>
  );
}
